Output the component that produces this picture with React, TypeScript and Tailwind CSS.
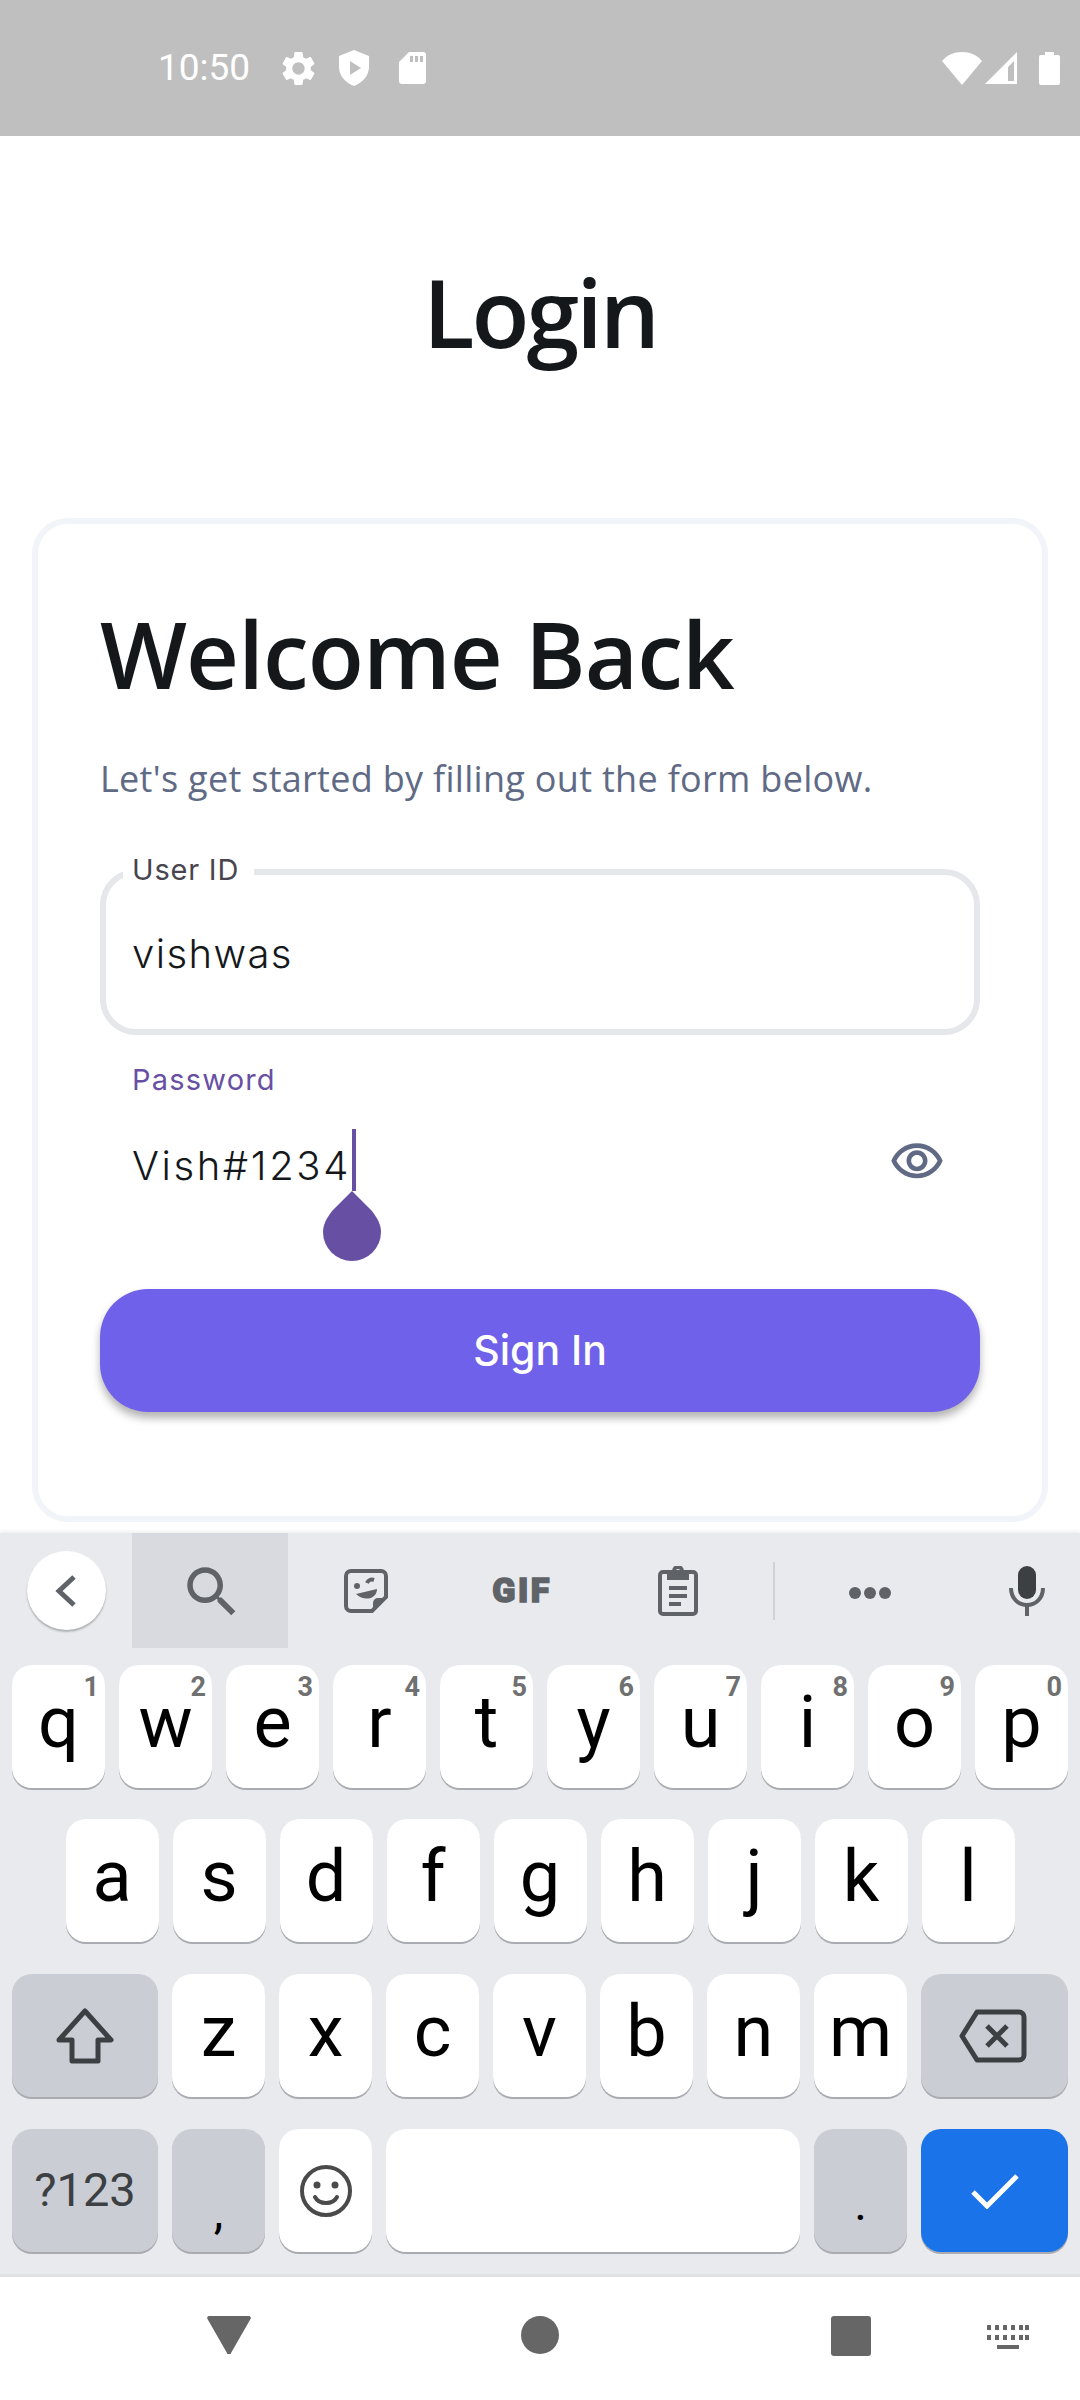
import React from "react";

const plex = { fontFamily: '"Open Sans", "Noto Sans", sans-serif' };

function Key({ ch, hint }: { ch: string; hint?: string }) {
  return (
    <div className="relative w-[93px] h-[123px] bg-white rounded-[20px] shadow-[0_2px_0_#a9abb0] flex items-center justify-center text-[72px] leading-none text-black pb-[8px]">
      {ch}
      {hint && <span className="absolute top-[7px] right-[6px] text-[27px] leading-[30px] font-bold text-[#707070]">{hint}</span>}
    </div>
  );
}

function StatusIcons() {
  return (
    <div className="flex items-center">
      <svg className="ml-[27px]" width="41" height="41" viewBox="0 0 24 24" fill="#fff"><path d="M19.14 12.94c.04-.3.06-.61.06-.94 0-.32-.02-.64-.07-.94l2.03-1.58c.18-.14.23-.41.12-.61l-1.92-3.32c-.12-.22-.37-.29-.59-.22l-2.39.96c-.5-.38-1.03-.7-1.62-.94l-.36-2.54c-.04-.24-.24-.41-.48-.41h-3.84c-.24 0-.43.17-.47.41l-.36 2.54c-.59.24-1.13.57-1.62.94l-2.39-.96c-.22-.08-.47 0-.59.22L2.74 8.87c-.12.21-.08.47.12.61l2.03 1.58c-.05.3-.09.63-.09.94s.02.64.07.94l-2.03 1.58c-.18.14-.23.41-.12.61l1.92 3.32c.12.22.37.29.59.22l2.39-.96c.5.38 1.03.7 1.62.94l.36 2.54c.05.24.24.41.48.41h3.84c.24 0 .44-.17.47-.41l.36-2.54c.59-.24 1.13-.56 1.62-.94l2.39.96c.22.08.47 0 .59-.22l1.92-3.32c.12-.22.07-.47-.12-.61l-2.01-1.58zM12 15.6c-1.98 0-3.6-1.62-3.6-3.6s1.62-3.6 3.6-3.6 3.6 1.62 3.6 3.6-1.62 3.6-3.6 3.6z" /></svg>
      <svg className="ml-[20px]" width="30" height="36" viewBox="0 0 30 36"><path fillRule="evenodd" fill="#fff" d="M15 0 L30 6 V17 C30 26 23 33 15 36 C7 33 0 26 0 17 V6 Z M11 11 V25 L22 18 Z" /></svg>
      <svg className="ml-[30px]" width="27" height="32" viewBox="0 0 27 32"><path fillRule="evenodd" fill="#fff" d="M10 0 H24 A3 3 0 0 1 27 3 V29 A3 3 0 0 1 24 32 H3 A3 3 0 0 1 0 29 V10 Z M11 4 V10 H14 V4 Z M16 4 V10 H19 V4 Z M21 4 V10 H24 V4 Z" /></svg>
    </div>
  );
}

export default function App() {
  return (
    <div className="w-[1080px] h-[2400px] flex flex-col overflow-hidden bg-white" style={{ fontFamily: 'Roboto, sans-serif' }}>
      {/* status bar */}
      <div className="h-[136px] shrink-0 bg-[#bfbfbf] flex items-start pt-[50px] pl-[158px] pr-[20px] justify-between">
        <div className="flex items-center h-[36px]">
          <span className="text-[37px] leading-[36px] text-white w-[93px]">10:50</span>
          <StatusIcons />
        </div>
        <div className="flex items-center h-[36px] gap-[3px]">
          <svg width="40" height="33" viewBox="0 0 40 33"><path fill="#fff" d="M20 33 L0 9 C5 3 12 0 20 0 C28 0 35 3 40 9 Z" /></svg>
          <svg width="32" height="32" viewBox="0 0 32 32"><path fillRule="evenodd" fill="#fff" d="M32 0 V32 H0 Z M29 9 L23 15 V29 H29 Z" /></svg>
          <svg className="ml-[19px]" width="21" height="33" viewBox="0 0 21 33"><path fill="#fff" d="M6 0 H15 V3 H19 A2 2 0 0 1 21 5 V31 A2 2 0 0 1 19 33 H2 A2 2 0 0 1 0 31 V5 A2 2 0 0 1 2 3 H6 Z" /></svg>
        </div>
      </div>

      {/* page */}
      <div className="h-[1397px] shrink-0 bg-white flex flex-col" style={plex}>
        <h1 className="h-[382px] pt-[110px] text-center text-[95px] leading-[130px] font-semibold tracking-[-3px] text-[#14181b] shrink-0">Login</h1>
        <div className="mx-[32px] h-[1004px] shrink-0 border-[6px] border-[#f1f4f8] rounded-[36px] pl-[62px] pr-[62px] flex flex-col">
          <h2 className="mt-[67px] text-[92px] leading-[125px] font-semibold tracking-[-0.9px] text-[#14181b] h-[125px]">Welcome Back</h2>
          <p className="mt-[38px] text-[36px] leading-[50px] text-[#606a85] tracking-[0.3px]">Let's get started by filling out the form below.</p>
          <div className="relative mt-[65px] h-[166px] border-[6px] border-[#e5e7eb] rounded-[36px] flex items-center pl-[26px]" style={{ fontFamily: 'Inter, sans-serif' }}>
            <span className="absolute left-[17px] -top-[25px] bg-white pl-[9px] pr-[15px] text-[29px] leading-[40px] text-[#49454f] tracking-[0.8px]">User ID</span>
            <span className="mt-[4px] text-[40px] leading-[56px] font-light text-[#14181b] tracking-[1.4px]">vishwas</span>
          </div>
          <div className="relative h-[254px] shrink-0" style={{ fontFamily: 'Inter, sans-serif' }}>
            <span className="absolute left-[32px] top-[25px] text-[29px] leading-[40px] text-[#6750a4] tracking-[1.2px]">Password</span>
            <span className="absolute left-[32px] top-[103px] text-[40px] leading-[56px] font-light text-[#14181b] tracking-[2.6px]">Vish#1234</span>
            <div className="absolute left-[252px] top-[94px] w-[4px] h-[62px] bg-[#6750a4]" />
            <svg className="absolute left-[223px] top-[156px]" width="58" height="70" viewBox="0 0 58 70"><path fill="#6750a4" d="M29 0 L49 20 C55 28 58 34 58 41 A29 29 0 0 1 0 41 C0 34 3 28 9 20 Z" /></svg>
            <svg className="absolute left-[789px] top-[99px]" width="56" height="56" viewBox="0 0 24 24" fill="#606a85"><path d="M12 6c3.79 0 7.17 2.13 8.82 5.5C19.17 14.87 15.79 17 12 17s-7.17-2.13-8.82-5.5C4.83 8.13 8.21 6 12 6m0-2C7 4 2.73 7.11 1 11.5 2.73 15.89 7 19 12 19s9.27-3.11 11-7.5C21.27 7.11 17 4 12 4zm0 5c1.38 0 2.5 1.12 2.5 2.5S13.38 14 12 14s-2.5-1.12-2.5-2.5S10.62 9 12 9m0-2c-2.48 0-4.5 2.02-4.5 4.5S9.52 16 12 16s4.5-2.02 4.5-4.5S14.48 7 12 7z" /></svg>
          </div>
          <div className="h-[123px] shrink-0 bg-[#6f61e9] rounded-[48px] shadow-[0_6px_8px_rgba(0,0,0,0.3)] flex items-center justify-center text-white text-[41px] font-medium" style={{ fontFamily: 'Inter, sans-serif' }}>Sign In</div>
        </div>
      </div>

      {/* keyboard */}
      <div className="h-[744px] shrink-0 bg-[#e8eaed] border-b-[3px] border-[#dfe1e5] flex flex-col shadow-[0_-2px_3px_rgba(0,0,0,0.06)]">
        <div className="h-[132px] shrink-0 flex items-start">
          <div className="w-[132px] h-[115px] flex items-center justify-center">
            <div className="w-[79px] h-[79px] rounded-full bg-white shadow-[0_2px_2px_rgba(0,0,0,0.25)] flex items-center justify-center">
              <svg width="24" height="34" viewBox="0 0 24 34" fill="none" stroke="#5f6368" strokeWidth="5"><path d="M20 3 L5 17 L20 31" /></svg>
            </div>
          </div>
          <div className="w-[156px] h-[115px] bg-[#d8dadf] flex items-center justify-center pl-[3px] pt-[3px]">
            <svg width="66" height="66" viewBox="0 0 24 24" fill="#5f6368"><path d="M15.5 14h-.79l-.28-.27C15.41 12.59 16 11.11 16 9.5 16 5.91 13.09 3 9.5 3S3 5.91 3 9.5 5.91 16 9.5 16c1.61 0 3.09-.59 4.23-1.57l.27.28v.79l5 4.99L20.49 19l-4.99-5zm-6 0C7.01 14 5 11.99 5 9.5S7.01 5 9.5 5 14 7.01 14 9.5 11.99 14 9.5 14z" /></svg>
          </div>
          <div className="w-[156px] h-[115px] flex items-center justify-center">
            <svg width="44" height="44" viewBox="0 0 44 44" fill="none" stroke="#5f6368" strokeWidth="4"><path d="M7 2 H37 A5 5 0 0 1 42 7 V28 L28 42 H7 A5 5 0 0 1 2 37 V7 A5 5 0 0 1 7 2 Z" /><path fill="#5f6368" stroke="none" d="M42 29 L29 42 V34 A5 5 0 0 1 34 29 Z" /><circle cx="13" cy="17" r="3" fill="#5f6368" stroke="none" /><path d="M23 14 C24 11 27 10 30 11" strokeWidth="4" /><path fill="#5f6368" stroke="none" d="M12 25 L33 20 C33 30 20 33 12 25 Z" /></svg>
          </div>
          <div className="w-[156px] h-[115px] flex items-center justify-center text-[#5f6368] text-[34px] font-black tracking-[2.5px] [-webkit-text-stroke:1.5px_#5f6368]">GIF</div>
          <div className="w-[156px] h-[115px] flex items-center justify-center">
            <svg width="40" height="50" viewBox="0 0 40 50" fill="none" stroke="#5f6368" strokeWidth="4"><rect x="2" y="6" width="36" height="42" rx="3" /><path fill="#5f6368" stroke="none" fillRule="evenodd" d="M9 5 H14 A6 6 0 0 1 26 5 H31 V14 H9 Z M20 3 A2.5 2.5 0 1 0 20 8 A2.5 2.5 0 1 0 20 3 Z" /><path strokeWidth="4" d="M11 22 H29 M11 30 H29 M11 38 H23" /></svg>
          </div>
          <div className="w-[2px] h-[58px] mt-[29px] ml-[17px] bg-[#d0d2d6]" />
          <div className="w-[190px] h-[115px] flex items-center justify-center pt-[4px] gap-[3px]">
            <span className="w-[12px] h-[12px] rounded-full bg-[#5f6368]" />
            <span className="w-[12px] h-[12px] rounded-full bg-[#5f6368]" />
            <span className="w-[12px] h-[12px] rounded-full bg-[#5f6368]" />
          </div>
          <div className="ml-[32px] w-[60px] h-[115px] flex items-center justify-center">
            <svg width="36" height="50" viewBox="0 0 36 50"><rect x="9" y="0" width="18" height="33" rx="9" fill="#3c4043" /><path d="M2 22 C2 33 10 39 18 39 C26 39 34 33 34 22" fill="none" stroke="#5f6368" strokeWidth="4" /><path d="M18 38 V50" stroke="#5f6368" strokeWidth="4" /></svg>
          </div>
        </div>

        <div className="flex flex-col">
          <div className="flex justify-center gap-[14px]">
            {[["q","1"],["w","2"],["e","3"],["r","4"],["t","5"],["y","6"],["u","7"],["i","8"],["o","9"],["p","0"]].map(([c,h]) => <Key key={c} ch={c} hint={h} />)}
          </div>
          <div className="mt-[31px] flex justify-center gap-[14px]">
            {["a","s","d","f","g","h","j","k","l"].map((c) => <Key key={c} ch={c} />)}
          </div>
          <div className="mt-[32px] flex justify-center gap-[14px]">
            <div className="w-[146px] h-[123px] bg-[#cacdd4] rounded-[20px] shadow-[0_2px_0_#a9abb0] flex items-center justify-center">
              <svg width="60" height="56" viewBox="0 0 60 56" fill="none" stroke="#3c4043" strokeWidth="5" strokeLinejoin="round"><path d="M30 3 L56 32 H43 V53 H17 V32 H4 Z" /></svg>
            </div>
            {["z","x","c","v","b","n","m"].map((c) => <Key key={c} ch={c} />)}
            <div className="w-[147px] h-[123px] bg-[#cacdd4] rounded-[20px] shadow-[0_2px_0_#a9abb0] flex items-center justify-center pr-[3px]">
              <svg width="68" height="54" viewBox="0 0 68 54" fill="none" stroke="#3c4043" strokeWidth="5" strokeLinejoin="round"><path d="M18 3 H60 A5 5 0 0 1 65 8 V46 A5 5 0 0 1 60 51 H18 L3 27 Z" /><path d="M28 17 L48 37 M48 17 L28 37" /></svg>
            </div>
          </div>
          <div className="mt-[32px] flex justify-center gap-[14px]">
            <div className="w-[146px] h-[123px] bg-[#cacdd4] rounded-[20px] shadow-[0_2px_0_#a9abb0] flex items-center justify-center text-[47px] text-[#3c4043]">?123</div>
            <div className="w-[93px] h-[123px] bg-[#cacdd4] rounded-[20px] shadow-[0_2px_0_#a9abb0] flex items-end justify-center text-[48px] leading-[48px] text-black pb-[16px]">,</div>
            <div className="w-[93px] h-[123px] bg-white rounded-[20px] shadow-[0_2px_0_#a9abb0] flex items-center justify-center">
              <svg width="52" height="54" viewBox="0 0 52 54" fill="none" stroke="#4a4a4a" strokeWidth="4"><circle cx="26" cy="27" r="24" /><circle cx="17" cy="21" r="3.5" fill="#4a4a4a" stroke="none" /><circle cx="35" cy="21" r="3.5" fill="#4a4a4a" stroke="none" /><path d="M15 33 C19 41 33 41 37 33" strokeLinecap="round" /></svg>
            </div>
            <div className="w-[414px] h-[123px] bg-white rounded-[20px] shadow-[0_2px_0_#a9abb0]" />
            <div className="w-[93px] h-[123px] bg-[#cacdd4] rounded-[20px] shadow-[0_2px_0_#a9abb0] flex items-end justify-center text-[48px] leading-[48px] text-black pb-[24px]">.</div>
            <div className="w-[147px] h-[123px] bg-[#1a73e8] rounded-[20px] shadow-[0_2px_0_#a9abb0] flex items-center justify-center">
              <svg width="48" height="36" viewBox="0 0 48 36" fill="none" stroke="#fff" strokeWidth="5"><path d="M2 19 L16 33 L46 3" /></svg>
            </div>
          </div>
        </div>
      </div>

      {/* nav bar */}
      <div className="flex-1 bg-white flex items-start pt-[39px]">
        <svg className="ml-[207px]" width="44" height="38" viewBox="0 0 44 38"><path fill="#666" d="M2 0 H42 A2 2 0 0 1 43.5 3 L24 37 A2 2 0 0 1 20 37 L0.5 3 A2 2 0 0 1 2 0 Z" /></svg>
        <div className="ml-[270px] w-[38px] h-[38px] rounded-full bg-[#666]" />
        <div className="ml-[272px] w-[40px] h-[40px] rounded-[3px] bg-[#666]" />
        <svg className="ml-[116px] mt-[9px]" width="42" height="24" viewBox="0 0 42 24" fill="#666"><path d="M0 0h4v5H0zM8 0h4v5H8zM16 0h4v5h-4zM24 0h4v5h-4zM32 0h4v5h-4zM38 0h4v5h-4zM0 10h4v5H0zM8 10h4v5H8zM16 10h4v5h-4zM24 10h4v5h-4zM32 10h4v5h-4zM38 10h4v5h-4zM10 20h22v4H10z" /></svg>
      </div>
    </div>
  );
}
